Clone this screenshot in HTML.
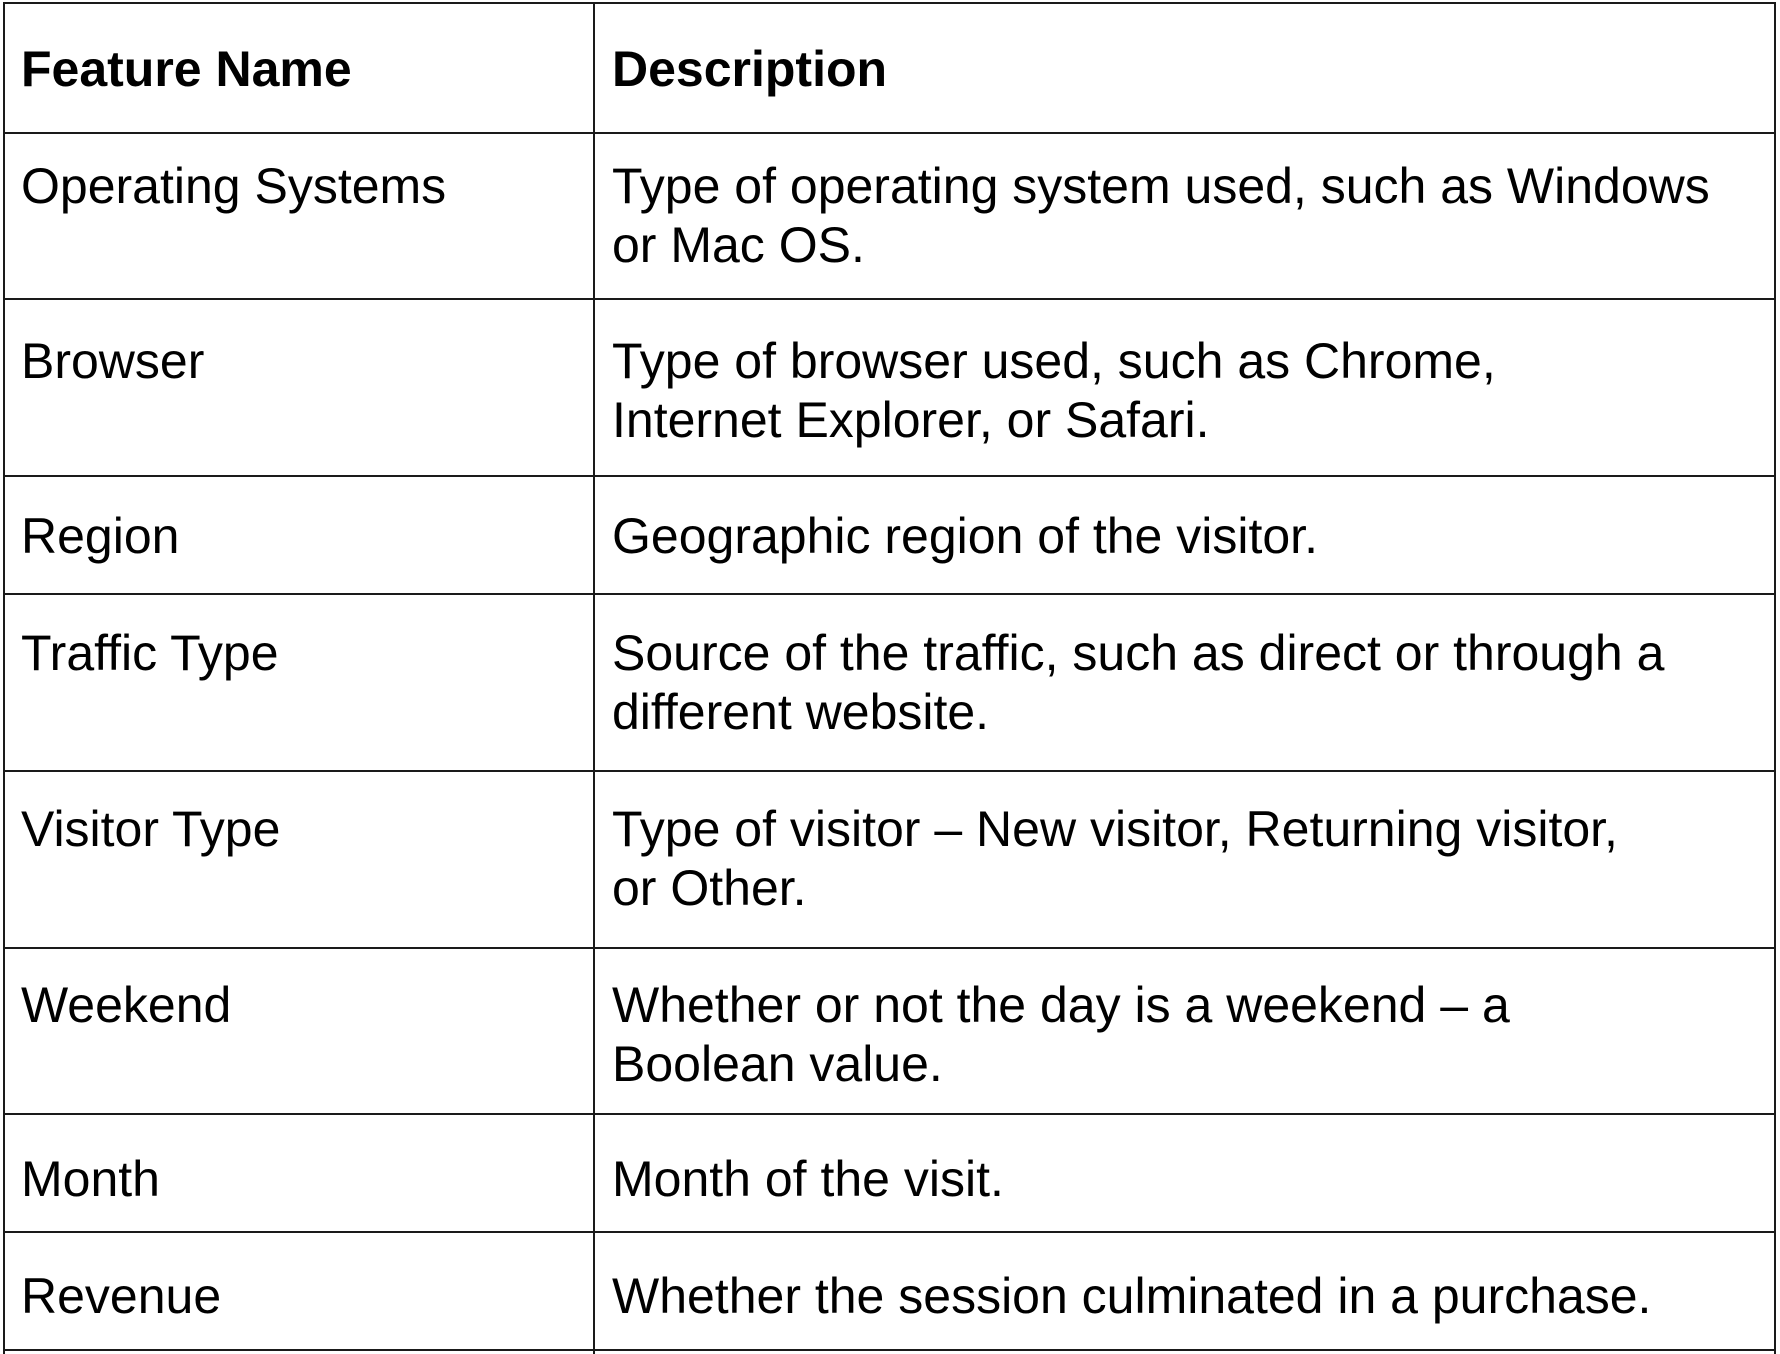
<!DOCTYPE html>
<html><head><meta charset="utf-8"><style>
html,body{margin:0;padding:0;background:#fff;width:1780px;height:1354px;overflow:hidden}
.h{position:absolute;left:3px;width:1773px;height:2px;background:#1a1a1a}
.v{position:absolute;top:3px;height:1351px;width:2px;background:#1a1a1a}
.t{position:absolute;font-family:"Liberation Sans",Arial,sans-serif;font-size:50px;line-height:59px;color:#000;white-space:nowrap}
.b{font-weight:bold}
</style></head><body>
<div class="h" style="top:2px"></div>
<div class="h" style="top:132px"></div>
<div class="h" style="top:298px"></div>
<div class="h" style="top:475px"></div>
<div class="h" style="top:593px"></div>
<div class="h" style="top:770px"></div>
<div class="h" style="top:947px"></div>
<div class="h" style="top:1113px"></div>
<div class="h" style="top:1231px"></div>
<div class="h" style="top:1349px"></div>
<div class="v" style="left:3px"></div>
<div class="v" style="left:593px"></div>
<div class="v" style="left:1774px"></div>

<div class="t b" style="left:21px;top:40px">Feature Name</div>
<div class="t b" style="left:612px;top:40px">Description</div>

<div class="t" style="left:21px;top:157px">Operating Systems</div>
<div class="t" style="left:612px;top:157px">Type of operating system used, such as Windows<br>or Mac OS.</div>

<div class="t" style="left:21px;top:332px">Browser</div>
<div class="t" style="left:612px;top:332px">Type of browser used, such as Chrome,<br>Internet Explorer, or Safari.</div>

<div class="t" style="left:21px;top:507px">Region</div>
<div class="t" style="left:612px;top:507px">Geographic region of the visitor.</div>

<div class="t" style="left:21px;top:624px">Traffic Type</div>
<div class="t" style="left:612px;top:624px">Source of the traffic, such as direct or through a<br>different website.</div>

<div class="t" style="left:21px;top:800px">Visitor Type</div>
<div class="t" style="left:612px;top:800px">Type of visitor – New visitor, Returning visitor,<br>or Other.</div>

<div class="t" style="left:21px;top:976px">Weekend</div>
<div class="t" style="left:612px;top:976px">Whether or not the day is a weekend – a<br>Boolean value.</div>

<div class="t" style="left:21px;top:1150px">Month</div>
<div class="t" style="left:612px;top:1150px">Month of the visit.</div>

<div class="t" style="left:21px;top:1267px">Revenue</div>
<div class="t" style="left:612px;top:1267px">Whether the session culminated in a purchase.</div>
</body></html>
